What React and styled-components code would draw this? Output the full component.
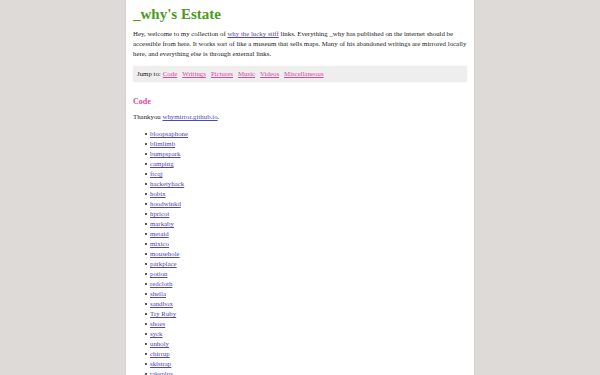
import React from "react";
import styled, { createGlobalStyle } from "styled-components";

const codeProjects = [
  "bloopsaphone",
  "blimlimb",
  "bumpspark",
  "camping",
  "ftcqj",
  "hacketyhack",
  "hobix",
  "hoodwinkd",
  "hpricot",
  "markaby",
  "metaid",
  "mixico",
  "mousehole",
  "parkplace",
  "potion",
  "redcloth",
  "sheila",
  "sandbox",
  "Try Ruby",
  "shoes",
  "syck",
  "unholy",
  "chirrup",
  "skistrap",
  "takeplus",
];

const sections = ["Code", "Writings", "Pictures", "Music", "Videos", "Miscellaneous"];

const App = () => {
  return (
    <>
      <GlobalStyle />
      <Page>
        <Title>_why's Estate</Title>
        <Intro>
          Hey, welcome to my collection of <Link href="#">why the lucky stiff</Link> links.
          Everything _why has published on the internet should be accessible from here. It
          works sort of like a museum that sells maps. Many of his abandoned writings are
          mirrored locally here, and everything else is through external links.
        </Intro>

        <JumpBar>
          Jump to:
          {sections.map((s) => (
            <JumpLink key={s} href="#">
              {s}
            </JumpLink>
          ))}
        </JumpBar>

        <SectionTitle>Code</SectionTitle>
        <Intro>
          Thankyou <Link href="#">whymirror.github.io</Link>.
        </Intro>

        <List>
          {codeProjects.map((p) => (
            <Item key={p}>
              <Link href="#">{p}</Link>
            </Item>
          ))}
        </List>
      </Page>
    </>
  );
};

export default App;

const GlobalStyle = createGlobalStyle`
  html, body {
    margin: 0;
    background: #dedad7;
    height: 100%;
    overflow: hidden;
  }
`;

const Page = styled.div`
  width: 337px;
  margin: 0 auto;
  min-height: 375px;
  padding: 4px 4px 0 7px;
  background: #fff;
  box-shadow: 0 0 2px rgba(0, 0, 0, 0.08);
  font-family: "Liberation Serif", "Times New Roman", serif;
  font-size: 6.85px;
  line-height: 10px;
  color: #222;
`;

const Title = styled.h1`
  margin: 0 0 5px 0;
  font-size: 15px;
  line-height: 20px;
  font-weight: bold;
  color: #4d9a22;
`;

const Intro = styled.p`
  margin: 0;
`;

const Link = styled.a`
  color: #5046c4;
  text-decoration: underline;
`;

const JumpBar = styled.div`
  display: flex;
  align-items: center;
  margin: 7px 3px 0 0;
  padding: 3px 4px;
  height: 10px;
  background: #eeeeee;
  box-shadow: 0 0 2px rgba(0, 0, 0, 0.06);
`;

const JumpLink = styled.a`
  margin-left: 5px;
  color: #e0469a;
  text-decoration: underline;

  &:first-of-type {
    margin-left: 2px;
  }
`;

const SectionTitle = styled.h2`
  margin: 14px 0 4px 0;
  font-size: 8px;
  line-height: 12px;
  font-weight: bold;
  color: #e0469a;
`;

const List = styled.ul`
  margin: 7px 0 0 0;
  padding-left: 12px;
  list-style: none;
`;

const Item = styled.li`
  display: flex;
  align-items: center;
  line-height: 10px;

  &::before {
    content: "";
    width: 2px;
    height: 2px;
    margin-right: 3px;
    border-radius: 50%;
    background: #222;
  }
`;
